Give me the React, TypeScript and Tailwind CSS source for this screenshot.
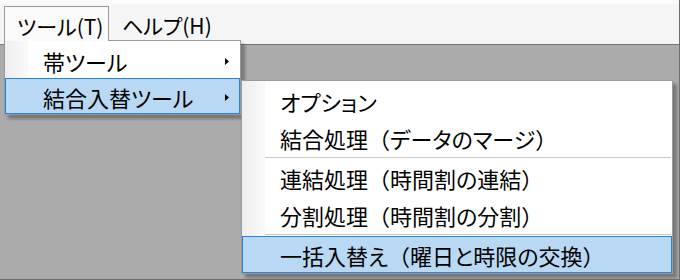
import React from "react";

const jp = "font-['Noto_Sans_CJK_JP',sans-serif] [font-feature-settings:'palt'] leading-none text-black";

// parens stay full width, kana get proportional widths
function Label({ text }: { text: string }) {
  const parts = text.split(/([（）])/).filter(Boolean);
  return (
    <span className="whitespace-nowrap text-[22px]">
      {parts.map((p, i) =>
        p === "（" || p === "）" ? (
          <span key={i} className="[font-feature-settings:normal]">
            {p}
          </span>
        ) : (
          <span key={i}>{p}</span>
        )
      )}
    </span>
  );
}

function Arrow() {
  return (
    <svg width="4" height="7" viewBox="0 0 4 7" className="shrink-0">
      <polygon points="0,0 4,3.5 0,7" fill="#000" />
    </svg>
  );
}

const menuBg =
  "bg-[linear-gradient(to_right,#eeeeee_0px,#fafafa_23px,#ffffff_23px)]";

const subItems = [
  { label: "オプション" },
  { label: "結合処理（データのマージ）" },
  { sep: true },
  { label: "連結処理（時間割の連結）" },
  { label: "分割処理（時間割の分割）" },
  { sep: true },
  { label: "一括入替え（曜日と時限の交換）", active: true },
];

export default function App() {
  return (
    <div className={`relative w-[680px] h-[280px] overflow-hidden bg-[#ababab] flex flex-col border-r border-b border-[#6e6e6e] text-[21px] ${jp}`}>
      <div className="h-[4px] bg-[#fbfbfb]" />
      {/* menu bar */}
      <div className="h-[41px] bg-[#f5f5f5] border-b border-[#777777] flex items-start pl-[4px]">
        <div className="relative z-20 mt-[2px] h-[35px] w-[105px] border-l border-t border-r border-[#9a9a9a] bg-[#fafafa] flex items-center pl-[12px] pt-[4px]">
          ツール(T)
        </div>
        <div className="mt-[2px] h-[35px] flex items-center pl-[13px] pt-[4px]">ヘルプ(H)</div>
      </div>

      {/* first dropdown */}
      <div className={`absolute left-[4px] top-[40px] z-10 w-[237px] h-[75px] border border-[#9a9a9a] pt-[1px] shadow-[4px_4px_3px_rgba(0,0,0,0.3)] ${menuBg}`}>
        <div className="h-[36px] flex items-center justify-between border border-transparent pl-[37px] pr-[10px] pt-[2px]">
          <Label text="帯ツール" />
          <Arrow />
        </div>
        <div className="h-[36px] flex items-center justify-between border border-[#2a83d8] bg-[#b8d8f4] pl-[37px] pr-[10px] pt-[2px]">
          <Label text="結合入替ツール" />
          <Arrow />
        </div>
      </div>

      {/* sub menu */}
      <div className={`absolute left-[241px] top-[80px] z-30 w-[432px] h-[194px] border border-[#9a9a9a] pt-[1px] shadow-[4px_4px_3px_rgba(0,0,0,0.3)] ${menuBg}`}>
        {subItems.map((it, i) =>
          it.sep ? (
            <div key={i} className="h-[3px] flex items-center pl-[23px] pr-[1px]">
              <div className="h-px w-full bg-[#c8c8c8]" />
            </div>
          ) : (
            <div
              key={i}
              className={`h-[37px] flex items-center border pl-[37px] pt-[1px] ${
                it.active ? "border-[#2a83d8] bg-[#b8d8f4]" : "border-transparent"
              }`}
            >
              <Label text={it.label!} />
            </div>
          )
        )}
      </div>
    </div>
  );
}
